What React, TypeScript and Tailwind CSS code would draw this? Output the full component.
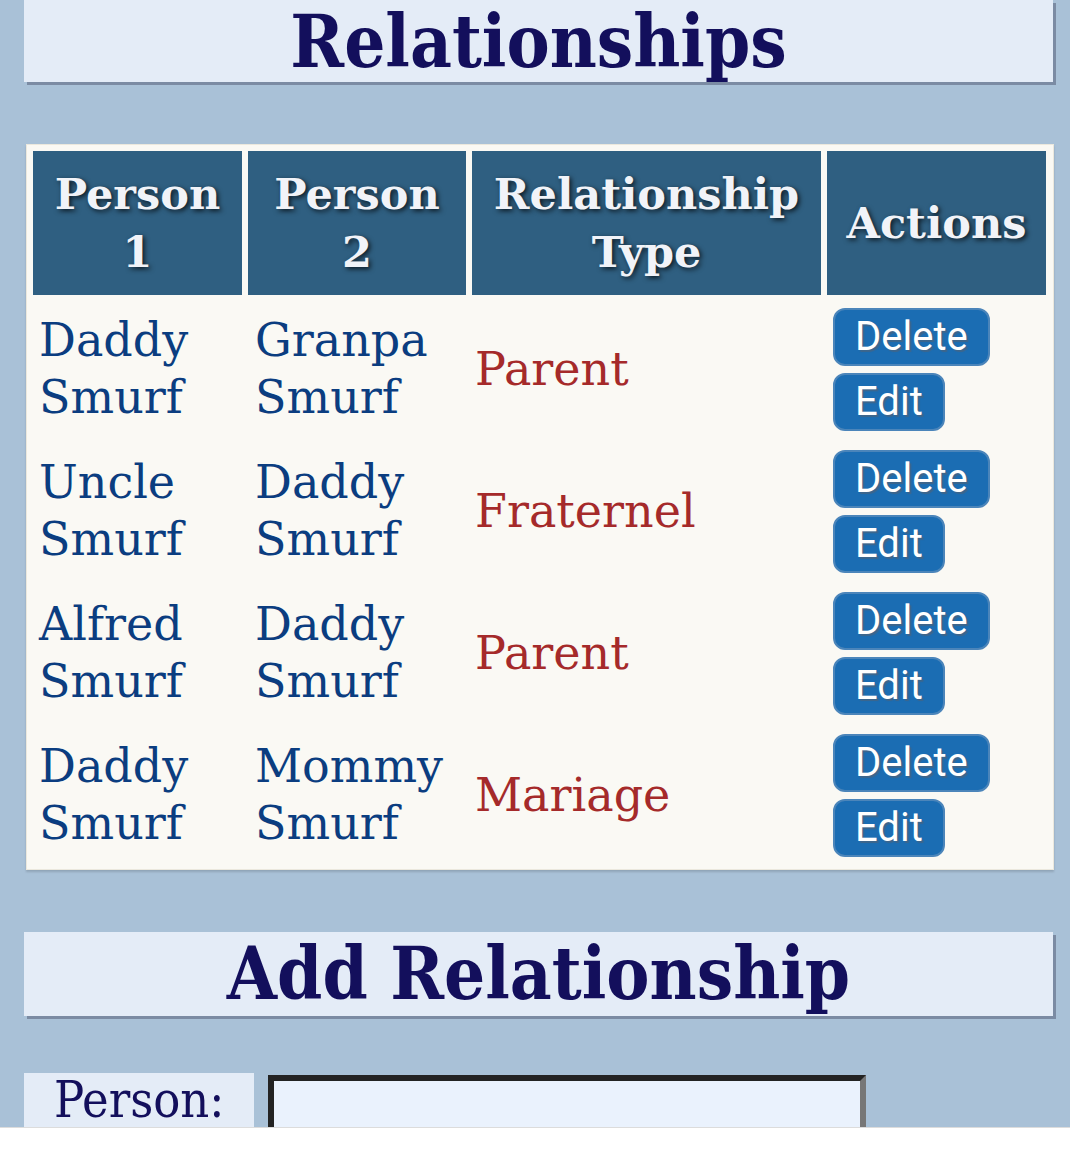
const rows = [
  { p1: ['Daddy', 'Smurf'], p2: ['Granpa', 'Smurf'], type: 'Parent' },
  { p1: ['Uncle', 'Smurf'], p2: ['Daddy', 'Smurf'], type: 'Fraternel' },
  { p1: ['Alfred', 'Smurf'], p2: ['Daddy', 'Smurf'], type: 'Parent' },
  { p1: ['Daddy', 'Smurf'], p2: ['Mommy', 'Smurf'], type: 'Mariage' },
];

const serif = "font-['DejaVu_Serif','Liberation_Serif',serif]";

function Title({ text, h }: { text: string; h: string }) {
  return (
    <div className={`mx-[24px] w-[1029px] ${h} bg-[#e4ecf7] shadow-[3px_3px_0_#7b8ba3] text-center`}>
      <h1 className={`${serif} pt-[2px] font-bold font-stretch-condensed text-[72px] leading-[80px] text-[#130f5c]`}>
        {text}
      </h1>
    </div>
  );
}

function ActionButton({ label }: { label: string }) {
  return (
    <button className="h-[58px] px-[20px] rounded-[12px] bg-[#1b6db3] border-2 border-[#4b85ba] text-white font-['Roboto',sans-serif] text-[40px] leading-none [text-shadow:2px_2px_1px_rgba(70,100,130,0.8)]">
      {label}
    </button>
  );
}

export default function App() {
  return (
    <div className="w-[1070px] h-[1149px] bg-white overflow-hidden">
      <div className="h-[1128px] bg-[#a9c1d7] overflow-hidden border-b border-[#dcdcdc]">
        <Title text="Relationships" h="h-[82px]" />

        {/* Relationship table */}
        <div className="mt-[62px] mx-[26px] w-[1028px] bg-[#faf9f4] border border-[#ebe8dd] shadow-[0_2px_2px_rgba(0,0,0,0.15)]">
          <table className={`${serif} border-separate border-spacing-[6px]`}>
            <thead>
              <tr className="h-[144px]">
                {[
                  ['Person', '1', 'w-[209px]'],
                  ['Person', '2', 'w-[218px]'],
                  ['Relationship', 'Type', 'w-[349px]'],
                  ['Actions', '', 'w-[219px]'],
                ].map(([a, b, w]) => (
                  <th
                    key={a + b}
                    className={`${w} bg-[#2f5f81] text-[#f1f3f8] font-bold text-[43px] leading-[58px] align-middle [text-shadow:2px_2px_5px_rgba(0,0,0,0.75)]`}
                  >
                    {a}
                    {b && <br />}
                    {b}
                  </th>
                ))}
              </tr>
            </thead>
            <tbody>
              {rows.map((r, i) => (
                <tr key={i} className="h-[136px]">
                  <td className="px-[6px] text-[46px] leading-[57px] text-[#0b3d80] align-middle">
                    {r.p1[0]}
                    <br />
                    {r.p1[1]}
                  </td>
                  <td className="px-[7px] text-[46px] leading-[57px] text-[#0b3d80] align-middle">
                    {r.p2[0]}
                    <br />
                    {r.p2[1]}
                  </td>
                  <td className="px-[3px] text-[46px] leading-[57px] text-[#a52a2a] align-middle">{r.type}</td>
                  <td className="px-[6px] align-middle">
                    <div className="flex flex-col items-start gap-[7px]">
                      <ActionButton label="Delete" />
                      <ActionButton label="Edit" />
                    </div>
                  </td>
                </tr>
              ))}
            </tbody>
          </table>
        </div>

        <div className="mt-[62px]">
          <Title text="Add Relationship" h="h-[84px]" />
        </div>

        {/* Form */}
        <div className="mt-[57px] ml-[24px] flex items-start gap-[14px]">
          <div className={`w-[230px] h-[60px] pt-[2px] bg-[#e4ecf7] ${serif} font-stretch-condensed text-[50px] leading-[50px] text-[#130f5c] pl-[30px]`}>
            Person:
          </div>
          <input
            type="text"
            className="mt-[2px] w-[598px] h-[60px] bg-[#eaf2fd] border-[6px] border-t-[#232323] border-l-[#232323] border-r-[#777] border-b-[#777] outline-none"
          />
        </div>
      </div>
    </div>
  );
}
